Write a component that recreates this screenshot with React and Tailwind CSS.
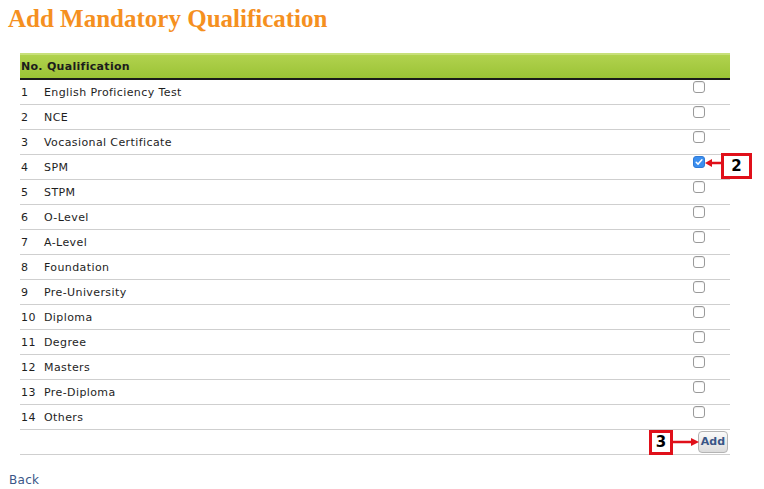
import React, { useState } from 'react';

const QUALS = [
  'English Proficiency Test',
  'NCE',
  'Vocasional Certificate',
  'SPM',
  'STPM',
  'O-Level',
  'A-Level',
  'Foundation',
  'Pre-University',
  'Diploma',
  'Degree',
  'Masters',
  'Pre-Diploma',
  'Others',
];

function Box({ checked, onClick }) {
  return (
    <span
      onClick={onClick}
      className={
        'relative block w-[12px] h-[12px] rounded-[3px] border ' +
        (checked
          ? 'bg-[#3b8ff0] border-[#2f7ad6]'
          : 'bg-white border-[#9a9a9a] shadow-[inset_0_1px_1px_rgba(0,0,0,0.08)]')
      }
    >
      {checked && (
        <svg viewBox="0 0 12 12" className="absolute -left-px -top-px w-[12px] h-[12px]">
          <path d="M3.2 6.2 L5.1 8.1 L8.9 3.8" fill="none" stroke="#fff" strokeWidth="1.5" strokeLinecap="round" strokeLinejoin="round" />
        </svg>
      )}
    </span>
  );
}

function Callout({ n, className }) {
  return (
    <div className={'absolute flex items-center justify-center bg-white border-[3px] border-[#e0101a] font-bold text-[15px] text-black ' + className}>
      {n}
    </div>
  );
}

export default function App() {
  const [checked, setChecked] = useState({ 3: true });

  return (
    <div className="relative w-[764px] h-[489px] bg-white overflow-hidden" style={{ fontFamily: '"DejaVu Sans", Verdana, sans-serif' }}>
      <h1 className="pl-[8px] pt-[5px] text-[25px] leading-[28px] font-bold text-[#f5901f]" style={{ fontFamily: '"Liberation Serif", Georgia, serif' }}>
        Add Mandatory Qualification
      </h1>

      <div className="ml-[20px] mt-[20px] w-[710px]">
        {/* header */}
        <div className="h-[27px] flex items-center px-[1px] pt-[1px] border-t-2 border-t-[#c8e07a] border-b-2 border-b-[#1a1a1a] bg-gradient-to-b from-[#b1d24e] to-[#9bc335] text-[11px] font-bold text-[#1c1c1c] tracking-[0.3px]">
          No. Qualification
        </div>

        {QUALS.map((q, i) => (
          <div key={q} className="h-[25px] flex border-b border-[#cfcfcf] text-[11px] text-[#1e1e1e] tracking-[0.4px]">
            <span className="w-[24px] pl-[1px] pt-[5px]">{i + 1}</span>
            <span className="flex-1 pt-[5px]">{q}</span>
            <span className="w-[37px] pt-[1px]">
              <Box checked={!!checked[i]} onClick={() => setChecked(c => ({ ...c, [i]: !c[i] }))} />
            </span>
          </div>
        ))}

        <div className="h-[25px] flex items-center justify-end pr-[2px] border-b border-[#cfcfcf]">
          <button className="h-[22px] w-[30px] rounded-[4px] border border-[#b4b4b4] bg-gradient-to-b from-[#fafafa] to-[#dcdcdc] text-[11px] font-bold text-[#3a5687]">
            Add
          </button>
        </div>
      </div>

      <a href="#" className="absolute left-[9px] top-[471px] text-[12px] text-[#3a5687] tracking-[0.3px]">Back</a>

      {/* callout 2 */}
      <Callout n="2" className="left-[721px] top-[153px] w-[31px] h-[26px]" />
      <svg className="absolute left-[705px] top-[157px]" width="18" height="12" viewBox="0 0 18 12">
        <path d="M0 6 L7 2 L7 4.8 L18 4.8 L18 7.2 L7 7.2 L7 10 Z" fill="#e0101a" />
      </svg>

      {/* callout 3 */}
      <Callout n="3" className="left-[649px] top-[430px] w-[24px] h-[25px]" />
      <svg className="absolute left-[672px] top-[436px]" width="27" height="12" viewBox="0 0 27 12">
        <path d="M0 4.8 L19 4.8 L19 2 L27 6 L19 10 L19 7.2 L0 7.2 Z" fill="#e0101a" />
      </svg>
    </div>
  );
}
